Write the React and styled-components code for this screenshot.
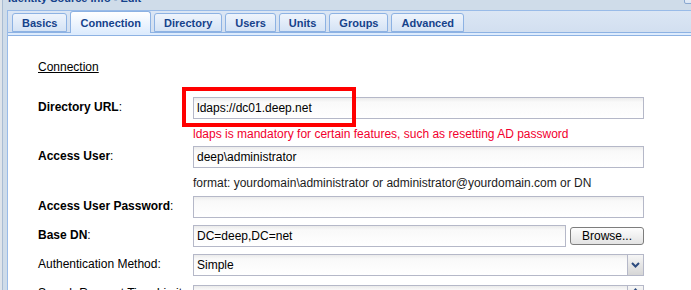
import React from "react";
import styled, { createGlobalStyle } from "styled-components";

const GlobalStyle = createGlobalStyle`
  html, body {
    margin: 0;
    padding: 0;
    width: 691px;
    height: 290px;
    overflow: hidden;
    background: #cfdce9;
    font-family: "Liberation Sans", Arial, sans-serif;
  }
  * { box-sizing: border-box; }
`;

const Frame = styled.div`
  width: 691px;
  height: 290px;
  overflow: hidden;
  border-left: 2px solid #dfe4ea;
  background: #cfdce9;
`;

const Inner = styled.div`
  height: 100%;
  border-left: 1px solid #a9bcd3;
  display: flex;
  flex-direction: column;
`;

const Header = styled.div`
  height: 10px;
  display: flex;
  justify-content: space-between;
  align-items: flex-start;
  padding-left: 5px;
  overflow: hidden;
  flex: none;
`;

const Title = styled.div`
  margin-top: -8px;
  line-height: 13px;
  font-size: 11px;
  font-weight: bold;
  color: #15428b;
  white-space: nowrap;
`;

const Tool = styled.div`
  width: 15px;
  height: 15px;
  margin-top: -11px;
  margin-right: -8px;
  border: 1px solid #8aa8d0;
  border-radius: 2px;
  background: linear-gradient(#ffffff, #dbe6f4);
`;

const Body = styled.div`
  flex: 1;
  margin-left: 4px;
  border-left: 1px solid #99bbe8;
  display: flex;
  flex-direction: column;
  min-height: 0;
`;

const TabStrip = styled.div`
  height: 23px;
  flex: none;
  border-top: 1px solid #99bbe8;
  border-bottom: 1px solid #8db2e3;
  background: linear-gradient(#dbe6f4, #d2dff0);
  display: flex;
  align-items: flex-end;
  gap: 3px;
  padding-left: 4px;
`;

const Tab = styled.div`
  height: ${(p) => (p.$active ? "22px" : "19px")};
  margin-bottom: ${(p) => (p.$active ? "-1px" : "0")};
  padding: 0 9px;
  display: flex;
  align-items: center;
  justify-content: center;
  font-size: 11px;
  font-weight: bold;
  color: #15428b;
  border: 1px solid #8db2e3;
  border-bottom: ${(p) => (p.$active ? "none" : "1px solid #8db2e3")};
  border-radius: 3px 3px 0 0;
  background: ${(p) =>
    p.$active
      ? "linear-gradient(#ffffff, #deecfd)"
      : "linear-gradient(#eef4fc, #d5e3f5)"};
  padding-top: ${(p) => (p.$active ? "0" : "1px")};
  white-space: nowrap;
`;

const Spacer = styled.div`
  height: 3px;
  flex: none;
  background: #deecfd;
  border-bottom: 1px solid #8db2e3;
`;

const Content = styled.div`
  flex: 1;
  background: #ffffff;
  padding: 24px 0 0 30px;
  overflow: hidden;
`;

const Heading = styled.div`
  font-size: 12px;
  line-height: 15px;
  color: #000;
  text-decoration: underline;
`;

const Row = styled.div`
  display: grid;
  grid-template-columns: 155px 451px;
  margin-top: ${(p) => p.$mt}px;
  align-items: start;
`;

const Label = styled.div`
  font-size: 12px;
  line-height: 15px;
  color: #000;
  padding-top: 3px;
  margin-top: ${(p) => p.$shift || 0}px;
  white-space: nowrap;
  b { font-weight: bold; }
`;

const Field = styled.div`
  position: relative;
  display: flex;
  align-items: center;
  gap: 4px;
`;

const Input = styled.input`
  width: ${(p) => p.$w || 451}px;
  height: 22px;
  margin: 0;
  border: 1px solid #b5b8c8;
  padding: 0 3px;
  font-family: "Liberation Sans", Arial, sans-serif;
  font-size: 12px;
  color: #000;
  background: linear-gradient(#ebebeb 0, #f9f9f9 4px, #ffffff 100%);
  outline: none;
`;

const Highlight = styled.div`
  position: absolute;
  left: -11px;
  top: -10px;
  width: 174px;
  height: 40px;
  border: 4px solid #ff0000;
  pointer-events: none;
`;

const Help = styled.div`
  font-size: 12px;
  line-height: 15px;
  color: ${(p) => (p.$error ? "#f2002e" : "#1c1c1c")};
  white-space: nowrap;
`;

const Button = styled.div`
  width: 74px;
  height: 18px;
  border: 1px solid #7d7d7d;
  border-radius: 3px;
  background: linear-gradient(#fdfdfd, #e3e3e3);
  font-size: 12px;
  color: #000;
  display: flex;
  align-items: center;
  justify-content: center;
`;

const Combo = styled.div`
  width: 451px;
  height: 22px;
  border: 1px solid #b5b8c8;
  display: flex;
  background: linear-gradient(#ebebeb 0, #f9f9f9 4px, #ffffff 100%);
`;

const ComboValue = styled.div`
  flex: 1;
  padding: 0 3px;
  font-size: 12px;
  line-height: 20px;
  color: #000;
`;

const Trigger = styled.div`
  width: 16px;
  flex: none;
  border-left: 1px solid #b5b8c8;
  background: linear-gradient(#f6f6f6, #d6d6d6);
  display: flex;
  align-items: ${(p) => (p.$spin ? "flex-start" : "center")};
  justify-content: center;
  padding-top: ${(p) => (p.$spin ? "2px" : "0")};
`;

const tabs = ["Basics", "Connection", "Directory", "Users", "Units", "Groups", "Advanced"];

export default function App() {
  return (
    <>
      <GlobalStyle />
      <Frame>
        <Inner>
          <Header>
            <Title>Identity Source Info - Edit</Title>
            <Tool />
          </Header>
          <Body>
            <TabStrip>
              {tabs.map((t) => (
                <Tab key={t} $active={t === "Connection"}>
                  {t}
                </Tab>
              ))}
            </TabStrip>
            <Spacer />
            <Content>
              <Heading>Connection</Heading>
              <Row $mt={22}>
                <Label>
                  <b>Directory URL</b>:
                </Label>
                <Field>
                  <Input readOnly value="ldaps://dc01.deep.net" />
                  <Highlight />
                </Field>
              </Row>
              <Row $mt={8}>
                <div />
                <Help $error>ldaps is mandatory for certain features, such as resetting AD password</Help>
              </Row>
              <Row $mt={4}>
                <Label>
                  <b>Access User</b>:
                </Label>
                <Field>
                  <Input readOnly value="deep\administrator" />
                </Field>
              </Row>
              <Row $mt={8}>
                <div />
                <Help>format: yourdomain\administrator or administrator@yourdomain.com or DN</Help>
              </Row>
              <Row $mt={5}>
                <Label>
                  <b>Access User Password</b>:
                </Label>
                <Field>
                  <Input readOnly value="" />
                </Field>
              </Row>
              <Row $mt={7}>
                <Label>
                  <b>Base DN</b>:
                </Label>
                <Field>
                  <Input readOnly $w={373} value="DC=deep,DC=net" />
                  <Button>Browse...</Button>
                </Field>
              </Row>
              <Row $mt={7}>
                <Label>Authentication Method:</Label>
                <Field>
                  <Combo>
                    <ComboValue>Simple</ComboValue>
                    <Trigger>
                      <svg width="9" height="6" viewBox="0 0 9 6">
                        <polyline points="1,1 4.5,4.5 8,1" fill="none" stroke="#2d4b7e" strokeWidth="2" />
                      </svg>
                    </Trigger>
                  </Combo>
                </Field>
              </Row>
              <Row $mt={9}>
                <Label $shift={-2}>Search Request Time Limit</Label>
                <Field>
                  <Combo>
                    <ComboValue />
                    <Trigger $spin>
                      <svg width="7" height="4" viewBox="0 0 7 4">
                        <polygon points="0,4 3.5,0 7,4" fill="#2d4b7e" />
                      </svg>
                    </Trigger>
                  </Combo>
                </Field>
              </Row>
            </Content>
          </Body>
        </Inner>
      </Frame>
    </>
  );
}
